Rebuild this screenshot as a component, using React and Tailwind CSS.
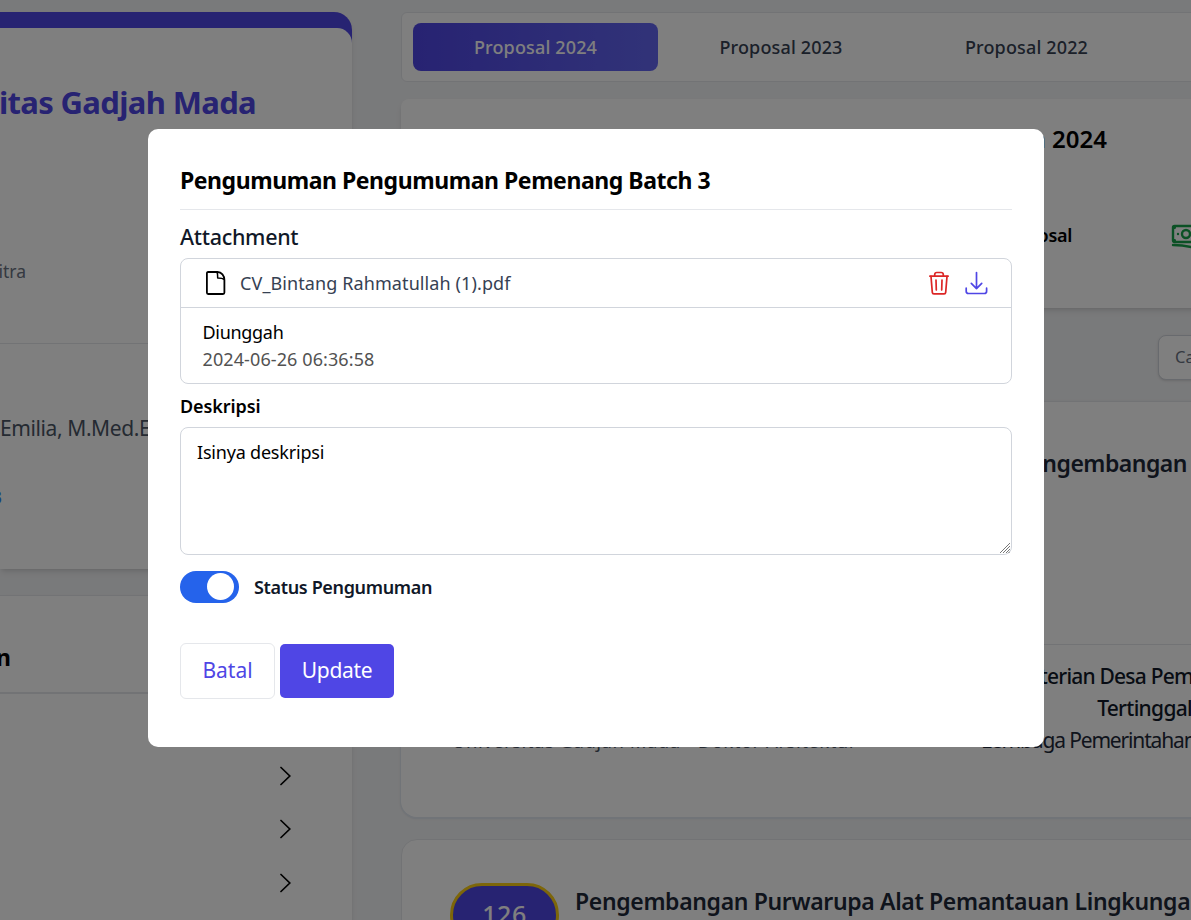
import { HiOutlineBanknotes } from 'react-icons/hi2'

function FileIcon() {
  return (
    <svg className="h-6 w-5" viewBox="0 0 20 24" fill="none" stroke="#000" strokeWidth="1.8" strokeLinejoin="round" strokeLinecap="round">
      <path d="M11.500 1H2.100C1.300 1 .9 1.600.9 2.400v19.200C.9 22.400 1.300 23 2.100 23h14.900c.8 0 1.400-.6 1.400-1.400V9C18.400 4.600 15.500 1 11.500 1Z" />
      <path d="M11 1.200c.6 1.200.7 3 .7 5.800 2.800 0 5 .2 6.500 1.400" strokeWidth="1.500" />
    </svg>
  )
}

function TrashIcon() {
  return (
    <svg className="h-6 w-5" viewBox="0 0 20 24" fill="none" stroke="#dc2626" strokeWidth="1.700" strokeLinecap="round" strokeLinejoin="round">
      <path d="M.8 5.200h18.400" />
      <path d="M5.700 5V3.700c0-1.400.9-2.200 2.200-2.200h4.200c1.300 0 2.200.8 2.200 2.200V5" />
      <path d="M2 5.400l1.300 16c.1 1 .7 1.500 1.600 1.500h10.200c.9 0 1.500-.5 1.600-1.500l1.300-16" />
      <path d="M7 9l.3 10M13 9l-.3 10" />
    </svg>
  )
}

function DownloadIcon() {
  return (
    <svg className="h-6 w-6" viewBox="0 0 24 24" fill="none" stroke="#4f46e5" strokeWidth="1.700" strokeLinecap="round" strokeLinejoin="round">
      <path d="M12.500 1.600v16M7.300 12.400l5.200 5.200 5.200-5.200" />
      <path d="M2.200 17.200v3c0 1.400.9 2.300 2.300 2.300h15.800c1.400 0 2.300-.9 2.300-2.300v-3" />
    </svg>
  )
}

function Chevron() {
  return (
    <svg className="h-5 w-3" viewBox="0 0 12 20" fill="none" stroke="#000" strokeWidth="1.700" strokeLinecap="round">
      <path d="M2 1.500 10.800 10 2 18.500" />
    </svg>
  )
}

function Sidebar() {
  return (
    <aside className="flex w-[352px] shrink-0 flex-col pt-3">
      <div className="h-[557px] shrink-0 rounded-tr-[18px] bg-[#4f46e5] pt-4 shadow-md">
        <div className="flex h-full flex-col overflow-hidden rounded-tr-[15px] bg-white">
          <h1 className="mt-[50px] flex h-12 w-[256px] shrink-0 justify-end overflow-hidden text-[31px] leading-[48px] font-bold tracking-[-0.65px] whitespace-nowrap text-[#4f46e5]">
            Universitas Gadjah Mada
          </h1>
          <p className="mt-[131px] flex h-7 w-[26px] shrink-0 justify-end overflow-hidden text-[17.5px] leading-7 text-gray-500">Mitra</p>
          <div className="mt-[58px] border-t border-gray-200" />
          <p className="mt-[68px] h-8 text-[21px] leading-8 tracking-[-0.4px] whitespace-nowrap text-gray-600">Emilia, M.Med.Ed</p>
          <p className="mt-[39px] flex h-7 w-[2px] justify-end overflow-hidden text-[17.5px] leading-7 text-blue-500">3</p>
        </div>
      </div>
      <div className="mt-[26px] flex h-[400px] shrink-0 flex-col border-t border-gray-200 bg-white shadow-md">
        <h2 className="mt-[45px] flex h-8 w-[11px] justify-end overflow-hidden text-[23px] leading-8 font-bold">n</h2>
        <div className="mt-[19px] border-t-2 border-gray-200" />
        <div className="mt-[72px] flex flex-col items-end gap-[33.400px] pr-[61px]">
          <Chevron />
          <Chevron />
          <Chevron />
        </div>
      </div>
    </aside>
  )
}

function Content() {
  return (
    <main className="ml-[49px] flex w-[860px] shrink-0 flex-col pt-3">
      <div className="flex h-[70px] shrink-0 rounded-md border border-gray-200 bg-white px-[11px] py-[10px] text-[18px] leading-[49px] font-medium tracking-[0.15px] text-gray-700">
        <div className="h-12 w-[245px] rounded-lg bg-linear-to-r/srgb from-[#4f46e5] to-[#6366f1] text-center text-white">Proposal 2024</div>
        <div className="w-[246px] text-center">Proposal 2023</div>
        <div className="w-[245px] text-center">Proposal 2022</div>
      </div>

      <section className="mt-[17px] flex h-[209px] shrink-0 flex-col rounded-lg bg-white shadow-md">
        <h2 className="mt-[24px] flex h-8 w-[706px] justify-end text-[24px] leading-8 font-semibold">Pengumuman 2024</h2>
        <div className="mt-[64px] flex h-8 items-center">
          <span className="flex w-[671px] justify-end text-[18px] font-semibold tracking-[-0.3px]">Proposal</span>
          <HiOutlineBanknotes className="mt-0.5 ml-[98px] size-8 text-[#16a34a] [stroke-width:1.8]" />
        </div>
      </section>

      <div className="mt-[27px] ml-[757px] h-[45px] w-[300px] shrink-0 rounded-lg border border-gray-300 bg-white px-4 text-[16.500px] leading-[42px] text-gray-500 shadow-sm">Cari</div>

      <section className="mt-[21px] flex h-[416px] shrink-0 flex-col rounded-2xl border-t border-gray-200 bg-white shadow-[0_1px_0_1px_#e2e8f0,0_1px_3px_#0002]">
        <h3 className="mt-[45px] flex h-8 w-[786px] justify-end text-[23px] leading-8 font-semibold tracking-[-0.5px] text-gray-800">Pengembangan</h3>
        <div className="mt-[165px] border-t border-gray-200" />
        <div className="mt-[15px] flex flex-col text-[21px] leading-8 whitespace-nowrap">
          <div className="flex w-[792px] justify-end font-medium tracking-[-0.8px] text-gray-900">Kementerian Desa Pem</div>
          <div className="flex w-[791px] justify-end font-medium tracking-[-0.7px] text-gray-900">Tertinggal</div>
          <div className="flex h-8">
            <span className="ml-[51px] w-[529px] pt-px text-[18.500px] tracking-[0.5px] text-gray-600">Universitas Gadjah Mada - Doktor Arsitektur</span>
            <span className="tracking-[-1.150px] text-gray-800">Lembaga Pemerintahan</span>
          </div>
        </div>
      </section>

      <section className="mt-[22px] flex h-[200px] shrink-0 gap-[17px] rounded-2xl border border-gray-200 bg-white pt-[43px] pl-12">
        <div className="h-16 w-[109px] shrink-0 rounded-[32px] border-[3px] border-[#facc15] bg-[#4f46e5] text-center text-[25px] leading-[57px] font-medium tracking-[0.5px] text-white">126</div>
        <h3 className="mt-[2px] -ml-px text-[23px] leading-8 font-semibold tracking-[-0.35px] whitespace-nowrap text-gray-800">
          Pengembangan Purwarupa Alat Pemantauan Lingkungan
        </h3>
      </section>
    </main>
  )
}

function Modal() {
  return (
    <div className="absolute inset-0 flex justify-center bg-black/50 pt-[129px]">
      <div className="ml-px h-[618px] w-[896px] rounded-[10px] bg-white p-8">
        <h2 className="h-[49px] border-b border-gray-200 text-[23px] leading-[38px] font-bold tracking-[-0.450px]">
          Pengumuman Pengumuman Pemenang Batch 3
        </h2>
        <h3 className="mt-[11px] text-[21.500px] leading-8 font-medium tracking-[-0.3px] text-gray-900">Attachment</h3>
        <div className="mt-[5px] h-[126px] rounded-lg border border-gray-300">
          <div className="flex h-[49px] items-center border-b border-gray-300 pr-[23px] pl-[25px]">
            <FileIcon />
            <span className="ml-[14px] flex-1 text-[18px] tracking-[0.1px] text-gray-700">CV_Bintang Rahmatullah (1).pdf</span>
            <TrashIcon />
            <span className="w-[15px]" />
            <DownloadIcon />
          </div>
          <div className="px-[21.500px] pt-[11px] text-[18px] leading-[27px]">
            <p className="tracking-[-0.3px]">Diunggah</p>
            <p className="tracking-[0.1px] text-[#525252]">2024-06-26 06:36:58</p>
          </div>
        </div>
        <p className="mt-2 text-[18px] leading-7 font-semibold tracking-[-0.1px]">Deskripsi</p>
        <div className="relative mt-[7px]">
          <textarea
            className="block h-32 w-full resize-none rounded-lg border border-gray-300 px-4 py-[10px] text-[18px] leading-7 tracking-[-0.2px] outline-none"
            defaultValue="Isinya deskripsi"
          />
          <svg className="absolute right-[2px] bottom-[2px] h-[10px] w-[10px]" viewBox="0 0 10 10" stroke="#555" strokeWidth="0.8">
            <path d="M0 10 10 0M3 10l7-7M6 10l4-4M8.500 10 10 8.500" />
          </svg>
        </div>
        <div className="mt-4 flex h-8 items-center gap-[15px]">
          <div className="flex h-8 w-[59px] items-start justify-end rounded-full bg-[#2563eb] pt-[2px] pr-[5px]">
            <div className="size-[27px] rounded-full bg-white" />
          </div>
          <span className="text-[18px] font-semibold tracking-[-0.350px] text-gray-900">Status Pengumuman</span>
        </div>
        <div className="mt-10 flex items-center gap-[5px] text-[21px]">
          <button className="h-14 w-[95px] rounded-md border border-gray-200 text-[#4f46e5]">Batal</button>
          <button className="h-[54px] w-[114px] rounded-[5px] bg-[#4f46e5] tracking-[-0.35px] text-white">Update</button>
        </div>
      </div>
    </div>
  )
}

export default function App() {
  return (
    <div className="relative flex h-[920px] w-full overflow-hidden bg-gray-100 font-['Noto_Sans',sans-serif] text-black">
      <Sidebar />
      <Content />
      <Modal />
    </div>
  )
}
